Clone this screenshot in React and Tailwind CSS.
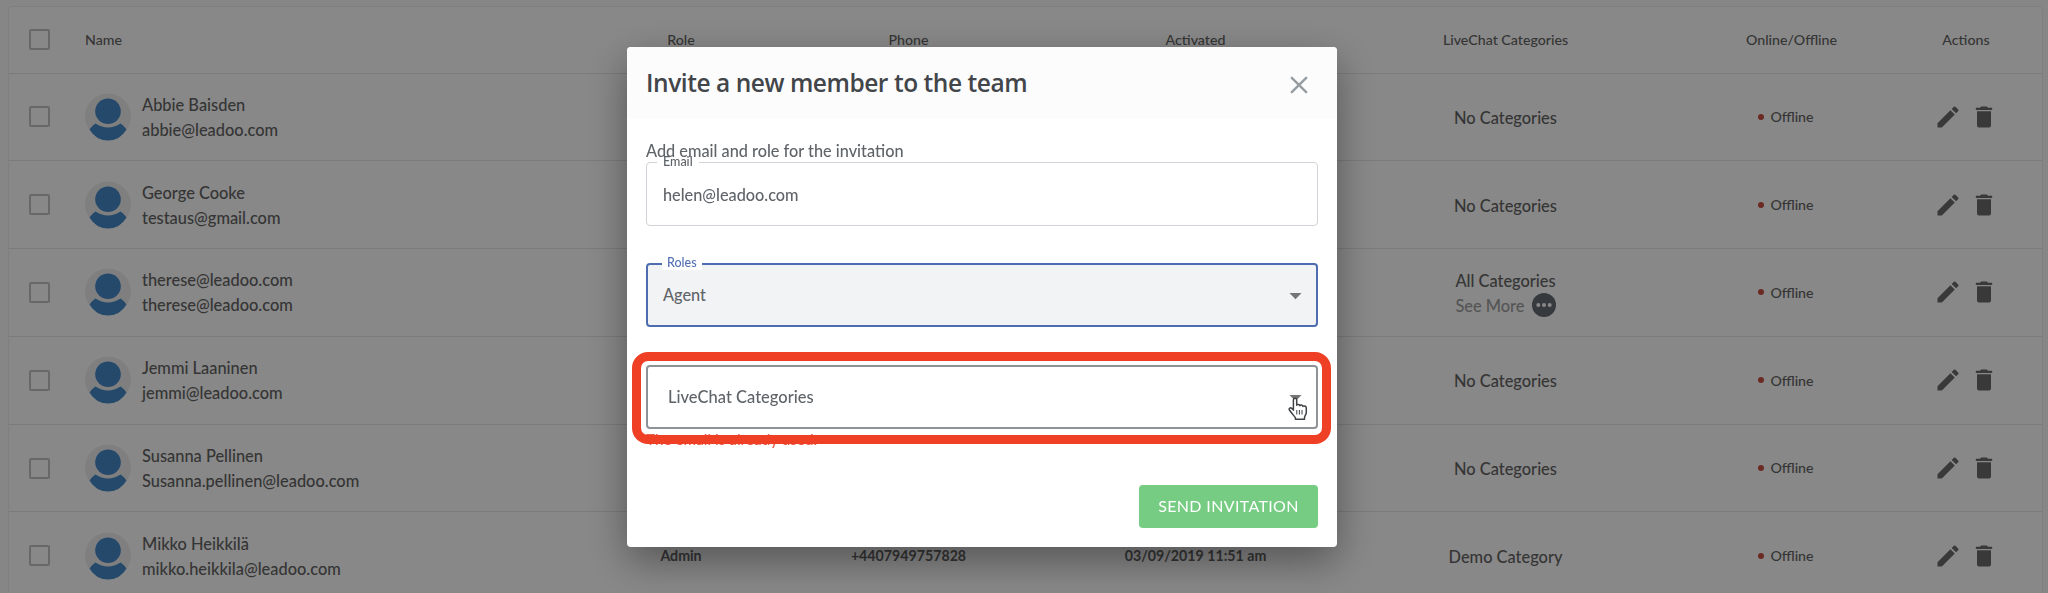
import React, { useState } from "react";
import { MdEdit, MdDelete, MdArrowDropDown } from "react-icons/md";

const members = [
  { name: "Abbie Baisden", email: "abbie@leadoo.com", category: "No Categories" },
  { name: "George Cooke", email: "testaus@gmail.com", category: "No Categories" },
  { name: "therese@leadoo.com", email: "therese@leadoo.com", category: "All Categories", more: true },
  { name: "Jemmi Laaninen", email: "jemmi@leadoo.com", category: "No Categories" },
  { name: "Susanna Pellinen", email: "Susanna.pellinen@leadoo.com", category: "No Categories" },
  {
    name: "Mikko Heikkilä",
    email: "mikko.heikkila@leadoo.com",
    role: "Admin",
    phone: "+4407949757828",
    activated: "03/09/2019 11:51 am",
    category: "Demo Category",
  },
];

const cols = "grid grid-cols-[76px_525px_142px_313px_261px_359px_213px_136px] items-center";

const Checkbox = () => (
  <span className="ml-5 block h-[21px] w-[21px] rounded-[2px] border-2 border-[#c4c4c4]" />
);

const Avatar = () => (
  <svg className="h-[48px] w-[46px] shrink-0" viewBox="0 0 46 48">
    <circle cx="23" cy="23.5" r="23" fill="#eeeeee" />
    <circle cx="23" cy="18.2" r="12.8" fill="#4789c9" />
    <path d="M10.5 30.5 Q23 38.5 35.5 30.5 Q39.5 33 41.5 36.5 Q35 47.5 23 47.5 Q11 47.5 4.5 36.5 Q6.5 33 10.5 30.5Z" fill="#4789c9" />
  </svg>
);

const MemberRow = ({ member }) => (
  <div className={`${cols} h-[87.8px] shrink-0 border-b border-[#e6e6e6]`}>
    <Checkbox />
    <div className="flex items-center gap-[11px]">
      <Avatar />
      <div className="text-[16.4px] leading-[25px]">
        <p>{member.name}</p>
        <p>{member.email}</p>
      </div>
    </div>
    <div className="text-center text-[14.2px] font-bold">{member.role}</div>
    <div className="text-center text-[14.2px] font-bold">{member.phone}</div>
    <div className="text-center text-[14.2px] font-bold">{member.activated}</div>
    <div className="flex justify-center pt-px text-[16.4px] leading-[25px]">
      <div>
        <p>{member.category}</p>
        {member.more && (
          <p className="flex items-center justify-between text-[#a0a0a0]">
            See More
            <svg className="h-6 w-6" viewBox="0 0 24 24">
              <circle cx="12" cy="12" r="12" fill="#666b74" />
              <g fill="#ffffff">
                <circle cx="6.3" cy="12" r="2" />
                <circle cx="12" cy="12" r="2" />
                <circle cx="17.7" cy="12" r="2" />
              </g>
            </svg>
          </p>
        )}
      </div>
    </div>
    <div className="flex items-center justify-center gap-[6px] pr-[11px] text-[14.2px]">
      <span className="h-[6px] w-[6px] rounded-full bg-[#c9503f]" />
      Offline
    </div>
    <div className="flex items-center justify-center gap-2 text-[#6c6c6e]">
      <MdEdit size={28} />
      <MdDelete size={28} />
    </div>
  </div>
);

const InviteModal = () => {
  const [email, setEmail] = useState("helen@leadoo.com");

  return (
    <div className="mt-[47px] ml-[627px] h-[500px] w-[710px] overflow-hidden rounded-[4px] bg-white text-[#5f6469] shadow-[0_14px_40px_rgba(0,0,0,0.38)]">
      <div className="flex h-[72px] items-center justify-between bg-[#fcfcfc] pr-[29px] pl-[19px]">
        <h2 className="font-['Open_Sans',sans-serif] text-[24.5px] font-semibold tracking-[-0.45px] text-[#424549]">
          Invite a new member to the team
        </h2>
        <button className="mt-1">
          <svg className="h-[18px] w-[18px]" viewBox="0 0 18 18" stroke="#969da3" strokeWidth="2.4" strokeLinecap="round">
            <path d="M1.8 1.8 16.2 16.2M16.2 1.8 1.8 16.2" />
          </svg>
        </button>
      </div>

      <div className="px-[19px] pt-[20px]">
        <p className="h-[23px] text-[16.3px] leading-[24px]">Add email and role for the invitation</p>

        <div className="relative h-[64px] rounded-[4px] border border-[#d0d3d7]">
          <span className="absolute top-[-9px] left-[10px] px-[6px] text-[12.5px] leading-[16px]">
            <span className="absolute inset-x-0 top-[7px] h-[3px] bg-white" />
            <span className="relative">Email</span>
          </span>
          <input
            className="h-full w-full px-4 text-[16.3px] outline-none"
            value={email}
            onChange={(e) => setEmail(e.target.value)}
          />
        </div>

        <div className="relative mt-[37px] flex h-[64px] items-center justify-between rounded-[4px] border-2 border-[#4d6db0] bg-[#f1f3f5] pr-[6px] pl-[15px] text-[16.3px]">
          <span className="absolute top-[-9px] left-[14px] bg-white px-[5px] text-[12.5px] leading-[14px] text-[#5672b5]">
            Roles
          </span>
          Agent
          <MdArrowDropDown size={29} className="text-[#757575]" />
        </div>

        <div className="relative mt-[38px] flex h-[64px] items-center justify-between rounded-[4px] border-2 border-[#8e9398] pr-[6px] pl-[20px] text-[16.5px]">
          LiveChat Categories
          <MdArrowDropDown size={29} className="text-[#757575]" />
          {/* pointer hovering the dropdown arrow */}
          <svg className="absolute top-[30px] right-[8px] h-[24px] w-[20px]" viewBox="0 0 20 24" fill="#ffffff" stroke="#3f4246" strokeWidth="1.5" strokeLinejoin="round">
            <path d="M5.4 3c0-2.2 3.2-2.2 3.3 0v5.2c.5-1.2 3-1 3.2.5.5-1.1 2.8-.8 3 .7.8-1 3.4-.4 3.4 1.6v4.2c0 2.3-1.6 3.6-1.8 5.3v1.8H7.4v-1.7c-1.5-1.9-4.1-4.8-6-7.6-1-1.8 1.2-2.8 2.5-1.5l1.5 1.6z" />
            <path d="M8.8 13v4.5M11.4 13v4.5M14 13v4.5" strokeWidth="1" />
          </svg>
          <div className="absolute -top-[15px] right-[-15px] -bottom-[17px] left-[-16px] z-10 rounded-[16px] border-[9px] border-[#ef4025]" />
        </div>

        <p className="text-[15.3px] leading-[20px] text-[#e8604c]">The email is already used.</p>

        <div className="mt-[36px] flex justify-end">
          <button className="h-[43px] w-[179px] rounded-[4px] bg-[#75cc82] pb-[2px] text-[16px] font-normal tracking-[0.35px] text-white">
            SEND INVITATION
          </button>
        </div>
      </div>
    </div>
  );
};

const App = () => {
  return (
    <div className="h-[593px] w-[2048px] overflow-hidden bg-[#fbfbfb] px-2 pt-[6px] font-['Lato',sans-serif] font-medium text-[#646464]">
      <div className="flex h-[640px] w-[2035px] flex-col rounded-[4px] border border-[#eeeeee] bg-white">
        <div className={`${cols} h-[66.5px] shrink-0 border-b border-[#e6e6e6] text-[14.2px]`}>
          <Checkbox />
          <div>Name</div>
          <div className="text-center">Role</div>
          <div className="text-center">Phone</div>
          <div className="text-center">Activated</div>
          <div className="text-center">LiveChat Categories</div>
          <div className="text-center">Online/Offline</div>
          <div className="text-center">Actions</div>
        </div>
        {members.map((member) => (
          <MemberRow key={member.email} member={member} />
        ))}
      </div>

      <div className="fixed inset-0 overflow-hidden bg-black/[0.467]">
        <InviteModal />
      </div>
    </div>
  );
};

export default App;
